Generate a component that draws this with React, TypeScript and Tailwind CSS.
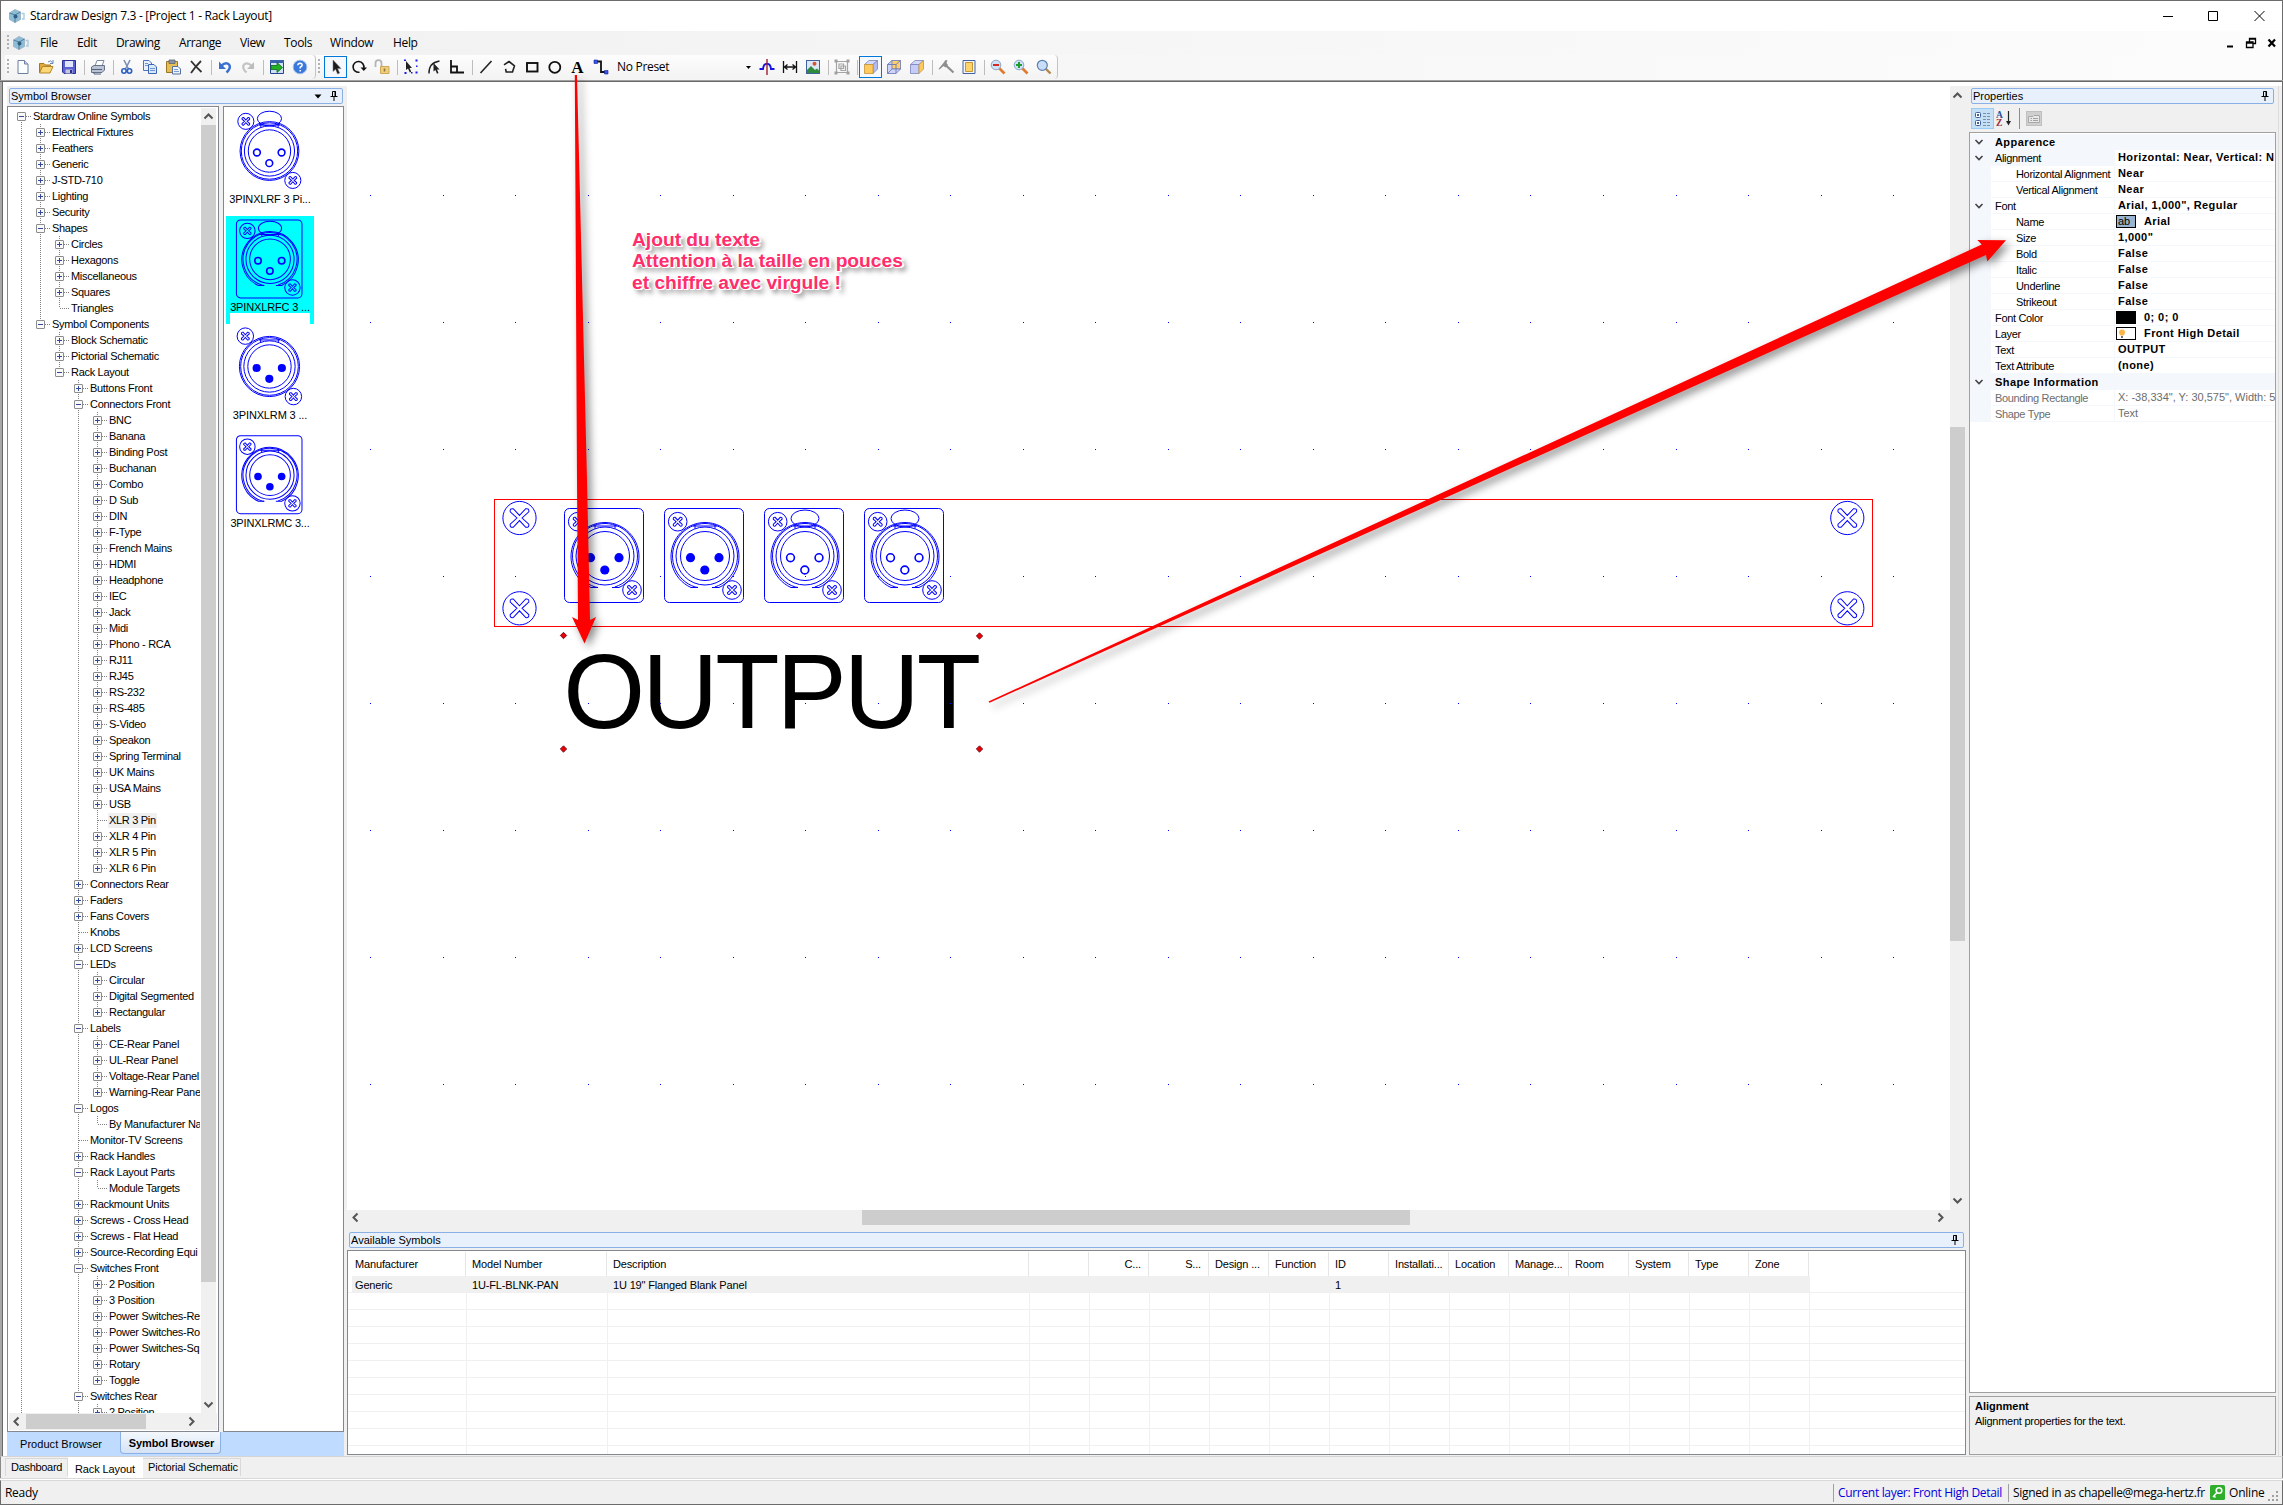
import React from "react";

const SANS = "font-['Liberation_Sans',Arial,sans-serif] text-[11px]";
const UI = "font-['Open_Sans','Noto_Sans',sans-serif] text-[12px]";

/* ---------- tree data: [level, state, label] ---------- */
type Row = [number, "+" | "-" | "", string];
const TREE: Row[] = [
  [0, "-", "Stardraw Online Symbols"],
  [1, "+", "Electrical Fixtures"],
  [1, "+", "Feathers"],
  [1, "+", "Generic"],
  [1, "+", "J-STD-710"],
  [1, "+", "Lighting"],
  [1, "+", "Security"],
  [1, "-", "Shapes"],
  [2, "+", "Circles"],
  [2, "+", "Hexagons"],
  [2, "+", "Miscellaneous"],
  [2, "+", "Squares"],
  [2, "", "Triangles"],
  [1, "-", "Symbol Components"],
  [2, "+", "Block Schematic"],
  [2, "+", "Pictorial Schematic"],
  [2, "-", "Rack Layout"],
  [3, "+", "Buttons Front"],
  [3, "-", "Connectors Front"],
  [4, "+", "BNC"],
  [4, "+", "Banana"],
  [4, "+", "Binding Post"],
  [4, "+", "Buchanan"],
  [4, "+", "Combo"],
  [4, "+", "D Sub"],
  [4, "+", "DIN"],
  [4, "+", "F-Type"],
  [4, "+", "French Mains"],
  [4, "+", "HDMI"],
  [4, "+", "Headphone"],
  [4, "+", "IEC"],
  [4, "+", "Jack"],
  [4, "+", "Midi"],
  [4, "+", "Phono - RCA"],
  [4, "+", "RJ11"],
  [4, "+", "RJ45"],
  [4, "+", "RS-232"],
  [4, "+", "RS-485"],
  [4, "+", "S-Video"],
  [4, "+", "Speakon"],
  [4, "+", "Spring Terminal"],
  [4, "+", "UK Mains"],
  [4, "+", "USA Mains"],
  [4, "+", "USB"],
  [4, "", "XLR 3 Pin"],
  [4, "+", "XLR 4 Pin"],
  [4, "+", "XLR 5 Pin"],
  [4, "+", "XLR 6 Pin"],
  [3, "+", "Connectors Rear"],
  [3, "+", "Faders"],
  [3, "+", "Fans Covers"],
  [3, "", "Knobs"],
  [3, "+", "LCD Screens"],
  [3, "-", "LEDs"],
  [4, "+", "Circular"],
  [4, "+", "Digital Segmented"],
  [4, "+", "Rectangular"],
  [3, "-", "Labels"],
  [4, "+", "CE-Rear Panel"],
  [4, "+", "UL-Rear Panel"],
  [4, "+", "Voltage-Rear Panel"],
  [4, "+", "Warning-Rear Pane"],
  [3, "-", "Logos"],
  [4, "", "By Manufacturer Na"],
  [3, "", "Monitor-TV Screens"],
  [3, "+", "Rack Handles"],
  [3, "-", "Rack Layout Parts"],
  [4, "", "Module Targets"],
  [3, "+", "Rackmount Units"],
  [3, "+", "Screws - Cross Head"],
  [3, "+", "Screws - Flat Head"],
  [3, "+", "Source-Recording Equi"],
  [3, "-", "Switches Front"],
  [4, "+", "2 Position"],
  [4, "+", "3 Position"],
  [4, "+", "Power Switches-Re"],
  [4, "+", "Power Switches-Ro"],
  [4, "+", "Power Switches-Sq"],
  [4, "+", "Rotary"],
  [4, "+", "Toggle"],
  [3, "-", "Switches Rear"],
  [4, "+", "2 Position"],
];

function continues(i: number, level: number) {
  for (let j = i + 1; j < TREE.length; j++) {
    if (TREE[j][0] === level) return true;
    if (TREE[j][0] < level) return false;
  }
  return level === 0 || level >= 3;
}

function TreeRow({ i }: { i: number }) {
  const [level, state, label] = TREE[i];
  const cells = [];
  for (let l = 0; l < level; l++) {
    cells.push(
      <svg key={l} className="h-4 w-[19px] shrink-0" viewBox="0 0 19 16">
        {continues(i, l) && <path d="M9.5 0V16" stroke="#808080" strokeDasharray="1 1" />}
      </svg>,
    );
  }
  return (
    <div className="flex h-4 shrink-0 items-center pl-1">
      {cells}
      <svg className="h-4 w-[19px] shrink-0" viewBox="0 0 19 16" fill="none">
        {i > 0 && <path d="M9.5 0V8" stroke="#808080" strokeDasharray="1 1" />}
        {continues(i, level) && <path d="M9.5 8V16" stroke="#808080" strokeDasharray="1 1" />}
        <path d="M10 8.5H19" stroke="#808080" strokeDasharray="1 1" />
        {state && (
          <>
            <rect x="5.5" y="4.5" width="8" height="8" rx="0.5" fill="#fafafa" stroke="#8c8c8c" />
            <path d={state === "+" ? "M7 8.5H12M9.5 6V11" : "M7 8.5H12"} stroke="#33499a" />
          </>
        )}
      </svg>
      <span
        className={
          "ml-px px-px leading-[15px] tracking-[-0.3px] whitespace-nowrap " +
          (label === "XLR 3 Pin" ? "bg-[#f0f0f0]" : "")
        }
      >
        {label}
      </span>
    </div>
  );
}

/* ---------- small shared drawings ---------- */
function Chevron({ dir }: { dir: "up" | "down" | "left" | "right" }) {
  const d = {
    up: "M3.5 9.5L7.5 5.5L11.5 9.5",
    down: "M3.5 5.5L7.5 9.5L11.5 5.5",
    left: "M9.5 3.5L5.5 7.5L9.5 11.5",
    right: "M5.5 3.5L9.5 7.5L5.5 11.5",
  }[dir];
  return (
    <svg className="h-[15px] w-[15px] shrink-0" viewBox="0 0 15 15" fill="none">
      <path d={d} stroke="#555" strokeWidth="2" />
    </svg>
  );
}

function Pin() {
  return (
    <svg className="h-3 w-2 shrink-0" viewBox="0 0 8 12" fill="none" stroke="#000">
      <path d="M2.5 1.5H5.5V6.5H2.5ZM5 1V7M0.5 6.5H7.5M4 7V11" />
    </svg>
  );
}

function PanelHeader({ title, arrow }: { title: string; arrow?: boolean }) {
  return (
    <div className="flex h-4 shrink-0 items-center rounded-[2px] border border-[#8bb0e6] bg-[#e8f0fb] pr-1 pl-px">
      <span className="flex-1 leading-[14px]">{title}</span>
      {arrow && (
        <svg className="mr-2 h-[5px] w-2" viewBox="0 0 8 5">
          <path d="M0.5 0.5H7.5L4 4.5Z" />
        </svg>
      )}
      <Pin />
    </div>
  );
}

/* ---------- connector symbols ---------- */
function Cross({ x, y, len, hw }: { x: number; y: number; len: number; hw: number }) {
  const a = len;
  const b = hw;
  return (
    <path
      transform={`translate(${x} ${y}) rotate(45)`}
      d={`M${-b} ${-b}L${-b * 1.2} ${-a + b}Q0 ${-a - b * 0.6} ${b * 1.2} ${-a + b}L${b} ${-b}L${a - b} ${-b * 1.2}Q${a + b * 0.6} 0 ${a - b} ${b * 1.2}L${b} ${b}L${b * 1.2} ${a - b}Q0 ${a + b * 0.6} ${-b * 1.2} ${a - b}L${-b} ${b}L${-a + b} ${b * 1.2}Q${-a - b * 0.6} 0 ${-a + b} ${-b * 1.2}Z`}
    />
  );
}

function Xlr({ x, y, s = 1, female, card }: { x: number; y: number; s?: number; female?: boolean; card?: boolean }) {
  const pins: [number, number][] = [
    [26.5, 49.7],
    [55, 49.7],
    [40.8, 62],
  ];
  return (
    <g transform={`translate(${x} ${y}) scale(${s})`} fill="none" stroke="#0000ff" strokeWidth={1 / s}>
      {card && <rect x="0.5" y="0.5" width="79" height="94" rx="5" />}
      <circle cx="13.7" cy="13.7" r="9.3" />
      <Cross x={13.7} y={13.7} len={6} hw={1.1} />
      <circle cx="68" cy="82" r="9.3" />
      <Cross x={68} y={82} len={6} hw={1.1} />
      {card ? (
        <>
          <path d="M34 79.5H27A34 34 0 1 1 55 79.5H48" />
          <path d="M34 79.5L31.2 79A32.5 32.5 0 1 1 50.8 79" />
        </>
      ) : (
        <>
          <circle cx="41" cy="48" r="34" />
          <circle cx="41" cy="48" r="32.6" />
        </>
      )}
      <circle cx="41" cy="48" r="29" />
      <circle cx="41" cy="48" r="24.5" />
      <path d="M31 16.5V20.5M51 16.5V20.5M29 18H53" />
      {female && <ellipse cx="41" cy="10.5" rx="14" ry="8.5" />}
      {pins.map(([px, py]) =>
        female ? (
          <circle key={px} cx={px} cy={py} r="3.9" strokeWidth={1.6 / s} />
        ) : (
          <circle key={px} cx={px} cy={py} r="4.6" fill="#0000ff" stroke="none" />
        ),
      )}
    </g>
  );
}

/* ---------- toolbar ---------- */
const ICONS: Record<string, React.ReactNode> = {
  new: (
    <>
      <path d="M3 1.5H9.5L13 5V14.5H3Z" fill="#fbfdff" stroke="#6d7fa3" />
      <path d="M9.5 1.5V5H13" fill="#c9d6ee" stroke="#6d7fa3" />
    </>
  ),
  open: (
    <>
      <path d="M1.5 13.5V4.5H6L7.5 6H12.5V8" fill="#e0a93a" stroke="#a8761c" />
      <path d="M1.5 14L4.5 7.5H15L12 14Z" fill="#fbd778" stroke="#b38528" />
      <path d="M10 3Q12.5 0.5 14.5 3.5M15 1V4.5H12" fill="none" stroke="#6888b8" />
    </>
  ),
  save: (
    <>
      <path d="M1.5 1.5H14.5V14.5H3L1.5 13Z" fill="#5b60d2" stroke="#2b2f8f" />
      <path d="M4 2H12V8H4Z" fill="#dfe6fb" />
      <path d="M4.5 10.5H11.5V14.5H4.5Z" fill="#c8c8d8" />
      <path d="M9 11V14H11V11Z" fill="#2b2f8f" />
    </>
  ),
  print: (
    <>
      <path d="M5 7L7 1.5H14L12 7Z" fill="#fff" stroke="#7c8aa5" />
      <path d="M1.5 8L4 6.5H14.5V11L12 13.5H1.5Z" fill="#b9c3d4" stroke="#66728a" />
      <path d="M2 10.5H12M4 13V15H11" stroke="#55617a" fill="none" />
    </>
  ),
  cut: (
    <>
      <path d="M5 1L9.5 10M11 1L6.5 10" stroke="#7a8fb5" strokeWidth="1.6" fill="none" />
      <circle cx="5" cy="12" r="2.2" fill="none" stroke="#2a5fc2" strokeWidth="1.6" />
      <circle cx="10.5" cy="12" r="2.2" fill="none" stroke="#2a5fc2" strokeWidth="1.6" />
    </>
  ),
  copy: (
    <>
      <path d="M1.5 1.5H7L9.5 4V11.5H1.5Z" fill="#e8f0fd" stroke="#4c74b8" />
      <path d="M6.5 5.5H12L14.5 8V14.5H6.5Z" fill="#dbe8fc" stroke="#3b66b0" />
      <path d="M8 9.5H13M8 11.5H13M3 4.5H6M3 6.5H6" stroke="#6f93cf" />
    </>
  ),
  paste: (
    <>
      <path d="M1.5 2.5H12.5V13.5H1.5Z" fill="#e7bd55" stroke="#9c7523" />
      <path d="M4 1H10V4.5H4Z" fill="#8b93a5" stroke="#5d6475" strokeWidth="0.8" />
      <path d="M7.5 7.5H13L15.5 10V15H7.5Z" fill="#eef3fc" stroke="#56709f" />
      <path d="M9 10.5H13M9 12.5H14" stroke="#7d9cd0" />
    </>
  ),
  x: <path d="M3 2Q7 7 13.5 13M13 2Q7 8 3 14" stroke="#333" strokeWidth="1.8" fill="none" />,
  undo: (
    <>
      <path d="M4 7Q9 2.5 12 5.5Q14.5 9 9.5 13.5" fill="none" stroke="#3a6fd0" strokeWidth="2.4" />
      <path d="M2 2.5V10H9Z" fill="#3a6fd0" />
    </>
  ),
  redo: (
    <>
      <path d="M12 7Q7 2.5 4 5.5Q1.5 9 6.5 13.5" fill="none" stroke="#c3c3c3" strokeWidth="2.2" />
      <path d="M14 3V10H7Z" fill="#bdbdbd" />
    </>
  ),
  import: (
    <>
      <path d="M1.5 1.5H14.5V14.5H1.5Z" fill="#cfe0f7" stroke="#27458e" />
      <path d="M1 1H15V4H1Z" fill="#3963ae" />
      <path d="M2 6.5H8V3.5L13.5 8.5L8 13.5V10.5H2Z" fill="#22b022" stroke="#0d6b14" strokeWidth="0.8" />
    </>
  ),
  help: (
    <>
      <circle cx="8" cy="8" r="6.8" fill="#3b78dc" stroke="#9db9e8" />
      <path d="M5.8 6.2Q6 4.2 8 4.2Q10.3 4.3 10.2 6.2Q10 7.4 8.2 8.2V9.6M8.2 11V12.6" stroke="#fff" strokeWidth="1.5" fill="none" />
    </>
  ),
  select: <path d="M5 1V12.5L7.6 10.2L9.6 15L11.6 14.1L9.6 9.6H13Z" fill="#1c1c1c" stroke="#777" strokeWidth="0.5" />,
  rotate: (
    <>
      <path d="M12.8 9A5.4 5.4 0 1 0 8.5 13.2" fill="none" stroke="#111" strokeWidth="1.6" />
      <path d="M9.5 8.5H16L12.8 12Z" fill="#111" />
    </>
  ),
  lock: (
    <>
      <path d="M1.5 8V4.5Q1.5 1.2 4.5 1.2T7.5 4.5V8" fill="none" stroke="#b5b5b5" strokeWidth="1.8" />
      <path d="M6.5 7.5H15V14.5H6.5Z" fill="#efcd7c" stroke="#cda857" />
      <path d="M10.5 9.5V12.5" stroke="#8d7434" strokeWidth="1.6" />
    </>
  ),
  nodes: (
    <>
      <path d="M3 2V11L5 9.5L6.8 13.5L8.2 12.7L6.6 9H9Z" fill="#222" />
      <path d="M1 0.5H3V2H1ZM12.5 0.5H14.5V2.5H12.5ZM12.5 12.5H14.5V14.5H12.5ZM1.5 13H3.5V15H1.5ZM13 6.5H14.5V8H13ZM8 13H9.5V14.5H8Z" fill="#1a1af0" />
    </>
  ),
  curve: (
    <>
      <path d="M3 14.5Q2.5 4 13.5 2" fill="none" stroke="#222" strokeWidth="1.4" />
      <path d="M7.5 4V12.5L9.4 11L11 14.8L12.5 14L11 10.4H13.6Z" fill="#222" />
    </>
  ),
  angle: <path d="M2 1V13.5H15M2 7.5H8V13.5" fill="none" stroke="#111" strokeWidth="1.8" />,
  line: <path d="M2.5 14L13.5 2" stroke="#222" strokeWidth="1.6" />,
  poly: <path d="M3 5.8L8 2.5L13.5 6.8L11.5 13H5.2L4.6 9.8" fill="none" stroke="#222" strokeWidth="1.6" strokeLinejoin="round" />,
  rect: <rect x="3" y="4" width="10.5" height="8.5" fill="none" stroke="#111" strokeWidth="1.9" />,
  ellipse: <circle cx="7.8" cy="8.3" r="5.5" fill="none" stroke="#111" strokeWidth="1.8" />,
  connector: (
    <>
      <path d="M3 2.5H8V13H13" fill="none" stroke="#111" strokeWidth="1.8" />
      <path d="M1 1H4.5V4.5H1ZM11.5 11.5H15V15H11.5Z" fill="#3a55e8" stroke="#1020a0" strokeWidth="0.6" />
    </>
  ),
  jump: (
    <>
      <path d="M0.5 10H4Q4.5 4.8 8 4.8T12 10H15.5" fill="none" stroke="#1414e0" strokeWidth="1.9" />
      <path d="M8 0V16" stroke="#a0202c" strokeWidth="1.4" />
    </>
  ),
  dim: <path d="M1.5 2V14M14.5 2V14M2 8H14M5.5 5.5L2.5 8L5.5 10.5M10.5 5.5L13.5 8L10.5 10.5" fill="none" stroke="#111" strokeWidth="1.3" />,
  picture: (
    <>
      <rect x="1.5" y="1.5" width="13" height="13" fill="#dbe7f8" stroke="#44619c" />
      <path d="M2 11L6 7L10 11L12 9.5L14 11.5V14H2Z" fill="#2f8b3c" />
      <circle cx="9.5" cy="4.8" r="2" fill="#d9542b" />
    </>
  ),
  group: (
    <>
      <path d="M2.5 2.5H13.5V13.5H2.5ZM5 5H9.5V9.5H5ZM7 7H11.5V11.5H7Z" fill="none" stroke="#a5a5a5" strokeWidth="1.2" />
      <path d="M0.5 0.5H3.5V3.5H0.5ZM12.5 0.5H15.5V3.5H12.5ZM0.5 12.5H3.5V15.5H0.5ZM12.5 12.5H15.5V15.5H12.5Z" fill="#a0a0a0" />
    </>
  ),
  cubeFront: (
    <>
      <path d="M1.5 5.5L6 1.5H14.5L10 5.5Z" fill="#d5d9fb" stroke="#7b84bb" strokeWidth="0.8" />
      <path d="M10 5.5L14.5 1.5V10L10 14.5Z" fill="#b3bbf0" stroke="#7b84bb" strokeWidth="0.8" />
      <path d="M1.5 5.5H10V14.5H1.5Z" fill="#ffc95c" stroke="#c4963a" strokeWidth="0.8" />
    </>
  ),
  cubeMid: (
    <>
      <path d="M1.5 5.5L6 1.5H14.5V10L10 14.5H1.5Z" fill="#cdd3fa" />
      <path d="M6 1.5H14.5V10H6Z" fill="#ffd06b" stroke="#6b77b4" strokeWidth="0.8" />
      <path d="M1.5 14.5L6 10H14.5L10 14.5Z" fill="#cdd3fa" stroke="#6b77b4" strokeWidth="0.8" />
      <path d="M1.5 5.5L6 1.5M1.5 5.5H10V14.5M1.5 5.5V14.5M10 5.5L14.5 1.5" fill="none" stroke="#6b77b4" strokeWidth="0.9" />
    </>
  ),
  cubeSide: (
    <>
      <path d="M1.5 5.5L6 1.5H14.5L10 5.5Z" fill="#d5d9fb" stroke="#7b84bb" strokeWidth="0.8" />
      <path d="M1.5 5.5H10V14.5H1.5Z" fill="#c6ccf8" stroke="#7b84bb" strokeWidth="0.8" />
      <path d="M10 5.5L14.5 1.5V10L10 14.5Z" fill="#ffc95c" stroke="#c4963a" strokeWidth="0.8" />
    </>
  ),
  hammer: (
    <>
      <path d="M0.5 10L5 4.5L7.5 1L9.5 1.5L8.5 4L10 6L7.5 8.5L5.5 7L1.5 10.5Z" fill="#8e8e8e" />
      <path d="M8 6.5L15.5 13.5" stroke="#8e8e8e" strokeWidth="2.2" />
    </>
  ),
  frame: (
    <>
      <path d="M2 1.5H14V14.5H2Z" fill="#f2f5fb" stroke="#44629f" />
      <path d="M4.5 3.5H11.5V12.5H4.5Z" fill="#ffd36b" stroke="#c9962f" />
    </>
  ),
  zoomOut: (
    <>
      <path d="M9 9L14.5 14.5" stroke="#e07a2e" strokeWidth="2.6" />
      <circle cx="6" cy="6" r="4.8" fill="#cfe2f8" stroke="#8ca6c8" />
      <path d="M3 6H9" stroke="#d42a1c" strokeWidth="2" />
    </>
  ),
  zoomIn: (
    <>
      <path d="M9 9L14.5 14.5" stroke="#e07a2e" strokeWidth="2.6" />
      <circle cx="6" cy="6" r="4.8" fill="#cfe2f8" stroke="#8ca6c8" />
      <path d="M3 6H9M6 3V9" stroke="#1f9c2e" strokeWidth="2" />
    </>
  ),
  zoom: (
    <>
      <path d="M9.5 9.5L14.5 14.5" stroke="#b08747" strokeWidth="2.4" />
      <circle cx="6.3" cy="6.3" r="5" fill="#c8ddf7" stroke="#5d7fb0" strokeWidth="1.2" />
    </>
  ),
};

function Tool({ name, on }: { name: string; on?: boolean }) {
  return (
    <div
      className={
        "flex h-[22px] w-[23px] shrink-0 items-center justify-center " +
        (on ? "border border-[#0078d7] bg-[#f5f9fd]" : "")
      }
    >
      {name === "A" ? (
        <span className="font-['Liberation_Serif',serif] text-[17px] leading-none font-bold">A</span>
      ) : (
        <svg className="h-4 w-4 shrink-0" viewBox="0 0 16 16">
          {ICONS[name]}
        </svg>
      )}
    </div>
  );
}

function Sep() {
  return (
    <div className="flex h-[15px] w-1.5 shrink-0 justify-end pr-px">
      <div className="w-px bg-[#bdbdbd]" />
    </div>
  );
}

function Grip() {
  return (
    <svg className="h-4 w-[3px] shrink-0" viewBox="0 0 3 16">
      <path d="M1 0V16" stroke="#b0b0b0" strokeWidth="2" strokeDasharray="2 2" />
    </svg>
  );
}

function AppLogo() {
  return (
    <svg className="h-4 w-4 shrink-0" viewBox="0 0 16 16">
      <path d="M0.5 5L6 1.5L11.5 4V11.5L6 14.5L0.5 11.5Z" fill="#8fbdd8" stroke="#9fb8c8" />
      <path d="M0.5 5L6 7L11.5 4M6 7V14.5" stroke="#4f7f9c" fill="none" />
      <circle cx="6.5" cy="8.5" r="2" fill="#2d5f80" />
      <path d="M12.5 5.5H15V11H13" stroke="#a8cde0" strokeWidth="1.4" fill="none" />
    </svg>
  );
}

function Toolbar() {
  return (
    <div className="flex h-[25px] shrink-0 bg-[#f6f6f6] bg-linear-to-r from-[#f2f2f2] to-[#fcfcfc] pl-1">
      <div className="flex h-[24px] w-[311px] shrink-0 items-center rounded-r border-r border-[#c4c4c4] bg-linear-to-b from-[#fdfdfd] to-[#f3f3f3] pl-0.5">
        <Grip />
        <div className="w-[1px] shrink-0" />
        <Tool name="new" />
        <Tool name="open" />
        <Tool name="save" />
        <Sep />
        <Tool name="print" />
        <Sep />
        <Tool name="cut" />
        <Tool name="copy" />
        <Tool name="paste" />
        <Tool name="x" />
        <Sep />
        <Tool name="undo" />
        <Tool name="redo" />
        <Sep />
        <Tool name="import" />
        <Tool name="help" />
      </div>
      <div className="flex h-[24px] w-[742px] shrink-0 items-center rounded-r border-r border-[#c4c4c4] bg-linear-to-b from-[#fdfdfd] to-[#f3f3f3] pl-0.5">
        <Grip />
        <div className="w-[3px] shrink-0" />
        <Tool name="select" on />
        <Tool name="rotate" />
        <Tool name="lock" />
        <Sep />
        <Tool name="nodes" />
        <Tool name="curve" />
        <Tool name="angle" />
        <Sep />
        <Tool name="line" />
        <Tool name="poly" />
        <Tool name="rect" />
        <Tool name="ellipse" />
        <Tool name="A" />
        <Tool name="connector" />
        <div className="flex w-[143px] shrink-0 items-center justify-between pr-1 pl-[5px]">
          <span className="tracking-[-0.3px]">No Preset</span>
          <svg className="h-[3px] w-[5px]" viewBox="0 0 5 3">
            <path d="M0 0H5L2.5 3Z" />
          </svg>
        </div>
        <Tool name="jump" />
        <Tool name="dim" />
        <Tool name="picture" />
        <Sep />
        <Tool name="group" />
        <Sep />
        <Tool name="cubeFront" on />
        <Tool name="cubeMid" />
        <Tool name="cubeSide" />
        <Sep />
        <Tool name="hammer" />
        <Tool name="frame" />
        <Sep />
        <Tool name="zoomOut" />
        <Tool name="zoomIn" />
        <Tool name="zoom" />
      </div>
    </div>
  );
}

/* ---------- left panel ---------- */
const THUMBS = [
  { label: "3PINXLRF 3 Pi...", x: 8, y: 1.5, s: 0.865, female: true, card: false },
  { label: "3PINXLRFC 3 ...", x: 10, y: 3.5, s: 0.83, female: true, card: true },
  { label: "3PINXLRM 3 ...", x: 7.2, y: 0, s: 0.885, female: false, card: false },
  { label: "3PINXLRMC 3...", x: 10, y: 3.3, s: 0.83, female: false, card: true },
];

function SymbolBrowser() {
  return (
    <div className="flex w-[340px] shrink-0 flex-col bg-[#f0f0f0] pt-0.5">
      <div className="mr-1 mb-0.5 ml-0.5">
        <PanelHeader title="Symbol Browser" arrow />
      </div>
      <div className="flex h-[1326px] shrink-0 gap-1">
        <div className="flex w-[212px] flex-col border border-[#828790] bg-white p-px">
          <div className="flex h-[1305px]">
            <div className="mr-px -ml-px flex w-[192px] flex-col overflow-hidden">
              {TREE.map((_, i) => (
                <TreeRow key={i} i={i} />
              ))}
            </div>
            <div className="flex w-[15px] flex-col items-center bg-[#f0f0f0]">
              <div className="flex h-[17px] items-center">
                <Chevron dir="up" />
              </div>
              <div className="h-[1157px] w-[15px] bg-[#cdcdcd]" />
              <div className="mt-auto flex h-[17px] items-center">
                <Chevron dir="down" />
              </div>
            </div>
          </div>
          <div className="flex h-[17px] items-center bg-[#f0f0f0]">
            <Chevron dir="left" />
            <div className="ml-0.5 h-[15px] w-[120px] bg-[#cdcdcd]" />
            <div className="ml-[38px]">
              <Chevron dir="right" />
            </div>
          </div>
        </div>
        <div className="flex w-[121px] flex-col border border-[#828790] bg-white pt-px pl-0.5">
          {THUMBS.map((t, i) => (
            <div key={t.label} className="flex h-[108px] w-[88px] shrink-0 flex-col">
              <div className={"flex h-[97px] flex-col items-center " + (i === 1 ? "bg-[#00ffff]" : "")}>
                <svg className="h-[84px] w-[88px] shrink-0" viewBox="0 0 88 84">
                  <Xlr x={t.x} y={t.y} s={t.s} female={t.female} card={t.card} />
                </svg>
                <span className="leading-[14px] tracking-[-0.15px] whitespace-nowrap">{t.label}</span>
              </div>
              {i === 1 && <div className="h-[11px] border-x-4 border-[#00ffff]" />}
            </div>
          ))}
        </div>
      </div>
      <div className="flex h-6 w-[337px] shrink-0 bg-[#bfdbff]">
        <div className="flex w-[113px] items-center pl-[13px] tracking-[0.05px]">Product Browser</div>
        <div className="flex h-[22px] w-[101px] items-center justify-center rounded-b border border-t-0 border-[#8bb0e6] bg-linear-to-b from-[#f4f8fd] to-[#d5e3f5] pt-0.5 pl-0.5 font-bold tracking-[-0.1px] whitespace-nowrap">
          Symbol Browser
        </div>
      </div>
    </div>
  );
}

/* ---------- drawing area ---------- */
function Drawing() {
  const dots = [];
  for (let r = 0; r < 8; r++)
    for (let c = 0; c < 22; c++)
      dots.push(
        <rect key={`${r}-${c}`} x={Math.round(370 + c * 72.53)} y={Math.round(195 + r * 127)} width="1" height="1" fill="#0000ff" />,
      );
  const screws: [number, number][] = [
    [519.5, 518],
    [519.5, 608.3],
    [1847.3, 518],
    [1847.3, 608.3],
  ];
  const handles: [number, number][] = [
    [563.5, 635.5],
    [979.5, 636],
    [563.5, 749],
    [979.5, 749],
  ];
  return (
    <svg className="h-[1124px] w-[1603px] shrink-0 bg-white" viewBox="347 86 1603 1124">
      <rect x="494.5" y="499.5" width="1378" height="127" fill="none" stroke="#ff0000" />
      <g fill="none" stroke="#0000ff">
        {screws.map(([x, y]) => (
          <g key={`${x}-${y}`}>
            <circle cx={x} cy={y} r="16.6" />
            <Cross x={x} y={y} len={12.8} hw={1.8} />
          </g>
        ))}
      </g>
      <Xlr x={564} y={508} card />
      <Xlr x={664} y={508} card />
      <Xlr x={764} y={508} card female />
      <Xlr x={864} y={508} card female />
      <text x="563.3" y="727.5" fontSize="105.3" letterSpacing="-3" className="font-['Liberation_Sans',Arial,sans-serif]">
        OUTPUT
      </text>
      {dots}
      {handles.map(([x, y]) => (
        <path key={`${x}-${y}`} d={`M${x - 3.2} ${y}L${x} ${y - 3.2}L${x + 3.2} ${y}L${x} ${y + 3.2}Z`} fill="#e8000c" stroke="#6b0005" strokeWidth="0.8" />
      ))}
    </svg>
  );
}

const COLUMNS = [
  { t: "Manufacturer", c: "w-[118px] pl-[7px]" },
  { t: "Model Number", c: "w-[141px] pl-[6px]" },
  { t: "Description", c: "w-[422px] pl-[6px]" },
  { t: "", c: "w-[60px]" },
  { t: "C...", c: "w-[60px] pr-[7px] text-right" },
  { t: "S...", c: "w-[60px] pr-[7px] text-right" },
  { t: "Design ...", c: "w-[60px] pl-[6px]" },
  { t: "Function", c: "w-[60px] pl-[6px]" },
  { t: "ID", c: "w-[60px] pl-[6px]" },
  { t: "Installati...", c: "w-[60px] pl-[6px]" },
  { t: "Location", c: "w-[60px] pl-[6px]" },
  { t: "Manage...", c: "w-[60px] pl-[6px]" },
  { t: "Room", c: "w-[60px] pl-[6px]" },
  { t: "System", c: "w-[60px] pl-[6px]" },
  { t: "Type", c: "w-[60px] pl-[6px]" },
  { t: "Zone", c: "w-[60px] pl-[6px]" },
];
const VALUES = ["Generic", "1U-FL-BLNK-PAN", '1U 19" Flanged Blank Panel', "", "", "", "", "", "1", "", "", "", "", "", "", ""];

function SymbolTable() {
  return (
    <div className="flex h-[205px] flex-col overflow-hidden border border-[#828790] bg-white tracking-[-0.16px]">
      <div className="flex h-[25px] shrink-0 pt-px">
        {COLUMNS.map((c, i) => (
          <div key={i} className={"shrink-0 border-r border-[#e5e5e5] leading-[25px] whitespace-nowrap " + c.c}>
            {c.t}
          </div>
        ))}
      </div>
      <div className="flex h-[17px] shrink-0 border-b border-[#f0f0f0] pl-1">
        <div className="flex w-[1458px] bg-[#f0f0f0]">
          {COLUMNS.map((c, i) => (
            <div key={i} className={"shrink-0 leading-[18px] whitespace-nowrap " + c.c + (i === 0 ? " -ml-1" : "")}>
              {VALUES[i]}
            </div>
          ))}
        </div>
      </div>
      {Array.from({ length: 10 }, (_, r) => (
        <div key={r} className="flex h-[17px] shrink-0 border-b border-[#f0f0f0] pl-px">
          {COLUMNS.map((c, i) => (
            <div key={i} className={"shrink-0 border-r border-[#f0f0f0] " + c.c} />
          ))}
        </div>
      ))}
    </div>
  );
}

function Center() {
  return (
    <div className="flex w-[1622px] shrink-0 flex-col bg-[#f0f0f0]">
      <div className="flex h-[1124px] shrink-0">
        <Drawing />
        <div className="flex w-[15px] flex-col">
          <div className="flex h-[341px] flex-col pt-0.5">
            <Chevron dir="up" />
          </div>
          <div className="h-[514px] bg-[#cdcdcd]" />
          <div className="mt-auto pb-0.5">
            <Chevron dir="down" />
          </div>
        </div>
      </div>
      <div className="flex h-[15px] shrink-0 pl-px">
        <Chevron dir="left" />
        <div className="ml-[499px] h-[15px] w-[548px] bg-[#cdcdcd]" />
        <div className="ml-[523px]">
          <Chevron dir="right" />
        </div>
      </div>
      <div className="mt-[7px] mr-[5px] mb-0.5 ml-0.5">
        <PanelHeader title="Available Symbols" />
      </div>
      <div className="mr-[3px]">
        <SymbolTable />
      </div>
    </div>
  );
}

/* ---------- properties ---------- */
type Prop = { k: string; v?: string; kind: "cat" | "exp" | "sub" | "row" | "off"; icon?: "ab" | "black" | "bulb" };
const PROPS: Prop[] = [
  { k: "Apparence", kind: "cat" },
  { k: "Alignment", v: "Horizontal: Near, Vertical: N", kind: "exp" },
  { k: "Horizontal Alignment", v: "Near", kind: "sub" },
  { k: "Vertical Alignment", v: "Near", kind: "sub" },
  { k: "Font", v: 'Arial, 1,000", Regular', kind: "exp" },
  { k: "Name", v: "Arial", kind: "sub", icon: "ab" },
  { k: "Size", v: '1,000"', kind: "sub" },
  { k: "Bold", v: "False", kind: "sub" },
  { k: "Italic", v: "False", kind: "sub" },
  { k: "Underline", v: "False", kind: "sub" },
  { k: "Strikeout", v: "False", kind: "sub" },
  { k: "Font Color", v: "0; 0; 0", kind: "row", icon: "black" },
  { k: "Layer", v: "Front High Detail", kind: "row", icon: "bulb" },
  { k: "Text", v: "OUTPUT", kind: "row" },
  { k: "Text Attribute", v: "(none)", kind: "row" },
  { k: "Shape Information", kind: "cat" },
  { k: "Bounding Rectangle", v: 'X: -38,334", Y: 30,575", Width: 5', kind: "off" },
  { k: "Shape Type", v: "Text", kind: "off" },
];

function PropRow({ p }: { p: Prop }) {
  const cat = p.kind === "cat";
  return (
    <div className={"flex h-4 shrink-0 whitespace-nowrap " + (p.kind === "off" ? "text-[#6d6d6d]" : "")}>
      <div className="flex w-[21px] shrink-0 items-center justify-center bg-[#f4f7fc]">
        {(cat || p.kind === "exp") && (
          <svg className="-ml-[3px] h-2 w-2.5" viewBox="0 0 10 8" fill="none">
            <path d="M1.5 2L5 5.5L8.5 2" stroke="#444" strokeWidth="1.6" />
          </svg>
        )}
      </div>
      {cat ? (
        <div className="flex-1 bg-[#f4f7fc] pl-1 leading-[16px] font-bold tracking-[0.42px]">{p.k}</div>
      ) : (
        <>
          <div
            className={
              "w-[124px] shrink-0 overflow-hidden border-r border-b border-[#f4f7fc] leading-[16px] tracking-[-0.33px] " +
              (p.kind === "sub" ? "pl-[25px]" : "pl-1") +
              (p.k === "Alignment" ? " bg-[#f4f7fc]" : "")
            }
          >
            {p.k}
          </div>
          <div
            className={
              "flex flex-1 items-center overflow-hidden border-b border-[#f4f7fc] leading-[15px] " +
              (p.kind === "off" ? "tracking-[0px]" : "font-bold tracking-[0.42px]") +
              (p.icon ? " pl-px" : " pl-[3px]")
            }
          >
            {p.icon === "ab" && (
              <span className="mr-2 flex h-[13px] w-5 items-center border border-black bg-[#99b4d1] pl-px text-[11px] font-normal tracking-normal">
                ab
              </span>
            )}
            {p.icon === "black" && <span className="mr-2 h-[13px] w-5 bg-black" />}
            {p.icon === "bulb" && (
              <span className="mr-2 flex h-[13px] w-5 items-center border border-black bg-white pl-px">
                <svg className="h-2.5 w-2" viewBox="0 0 8 10">
                  <path d="M1 3.5A3 3 0 1 1 7 3.5Q7 5 5.5 6.5H2.5Q1 5 1 3.5Z" fill="#ffb545" />
                  <path d="M3 7H5V9H3Z" fill="#6d7480" />
                </svg>
              </span>
            )}
            {p.v}
          </div>
        </>
      )}
    </div>
  );
}

function Properties() {
  return (
    <div className="flex w-[307px] shrink-0 flex-col pt-0.5">
      <div className="mr-0.5 ml-0.5">
        <PanelHeader title="Properties" />
      </div>
      <div className="flex h-7 shrink-0 items-center pt-px pl-0.5">
        <div className="flex h-[21px] w-[23px] items-center justify-center border border-[#99ccf5] bg-[#c4e0f7]">
          <svg className="h-4 w-[17px]" viewBox="0 0 17 16" fill="none">
            <rect x="1.5" y="1.5" width="5" height="5" rx="1" fill="#fff" stroke="#3f5f98" />
            <rect x="1.5" y="9.5" width="5" height="5" rx="1" fill="#fff" stroke="#3f5f98" />
            <path d="M3 4H5M4 3V5M3 12H5M4 11V13" stroke="#102a70" />
            <path d="M9 2.5H12M13 2.5H16M9 5.5H12M13 5.5H16M9 8.5H12M13 8.5H16M9 11.5H12M13 11.5H16M9 14.5H12M13 14.5H16" stroke="#7d8fa8" />
          </svg>
        </div>
        <svg className="ml-0.5 h-[17px] w-4" viewBox="0 0 16 17">
          <text x="0" y="7.5" fontSize="9.5" fontWeight="bold" fill="#2c4ea0" className="font-['Liberation_Serif',serif]">
            A
          </text>
          <text x="0" y="16" fontSize="9.5" fontWeight="bold" fill="#a02c3c" className="font-['Liberation_Serif',serif]">
            Z
          </text>
          <path d="M12.5 1V12" stroke="#222" strokeWidth="1.2" />
          <path d="M10 11H15L12.5 15.5Z" fill="#222" />
        </svg>
        <div className="ml-[7px] h-[21px] w-px bg-[#8d8d8d]" />
        <svg className="ml-1.5 h-4 w-4" viewBox="0 0 16 16" fill="none" stroke="#b5b5b5">
          <rect x="0.5" y="0.5" width="15" height="14" fill="#cfcfcf" stroke="#c0c0c0" />
          <path d="M2.5 5.5H7L8 4.5H13.5V11.5H2.5Z" fill="#e8e8e8" stroke="#a8a8a8" />
          <path d="M4.5 7.5H6M7 7.5H12M4.5 9.5H6M7 9.5H12" stroke="#a0a0a0" />
        </svg>
      </div>
      <div className="flex h-[1261px] shrink-0 flex-col border border-[#a0a0a0] bg-white pt-px">
        {PROPS.map((p) => (
          <PropRow key={p.k} p={p} />
        ))}
      </div>
      <div className="mt-[3px] h-[59px] shrink-0 border border-[#a0a0a0] pt-0.5 pl-[5px]">
        <div className="leading-[15px] font-bold">Alignment</div>
        <div className="leading-[15px] tracking-[-0.25px]">Alignment properties for the text.</div>
      </div>
    </div>
  );
}

/* ---------- annotation arrows ---------- */
function Arrows() {
  return (
    <svg
      className="pointer-events-none absolute top-0 left-0 h-[1505px] w-[2283px] drop-shadow-[4px_4px_4px_rgba(0,0,0,0.45)]"
      viewBox="0 0 2283 1505"
      fill="#ff0000"
    >
      <path d="M574.8 75H577L587 480L590 620L596 617L584.5 643.5L572 617L578 620L577 480Z" />
      <path d="M988.5 701.5L1981.7 244.5L1977.3 240L2006 240.3L1987.3 261.5L1986 255L989.5 702.7Z" />
    </svg>
  );
}

const MENU: [string, string][] = [
  ["File", "w-[37px]"],
  ["Edit", "w-[39px]"],
  ["Drawing", "w-[63px]"],
  ["Arrange", "w-[61px]"],
  ["View", "w-[44px]"],
  ["Tools", "w-[46px]"],
  ["Window", "w-[63px]"],
  ["Help", "w-[40px]"],
];

export default function App() {
  return (
    <div className={"relative flex h-[1505px] w-[2283px] flex-col overflow-hidden bg-[#f0f0f0] text-black " + SANS}>
      <div className={"flex h-[31px] shrink-0 items-center border-x border-t border-[#6b6b6b] bg-white pl-2 " + UI}>
        <AppLogo />
        <span className="ml-[5px] tracking-[-0.3px]">Stardraw Design 7.3 - [Project 1 - Rack Layout]</span>
        <svg className="mr-[6px] ml-auto h-3 w-[116px]" viewBox="0 0 116 12" fill="none" stroke="#000">
          <path d="M3 6.5H13M48.5 1.5H57.5V10.5H48.5ZM94.5 1L104.5 11M104.5 1L94.5 11" />
        </svg>
      </div>
      <div className={"flex h-6 shrink-0 items-center border-x border-[#6b6b6b] bg-linear-to-r from-[#f0f0f0] to-[#fcfcfc] pl-1.5 " + UI}>
        <Grip />
        <div className="ml-[3px] w-[27px]">
          <AppLogo />
        </div>
        {MENU.map(([m, w]) => (
          <span key={m} className={"shrink-0 tracking-[-0.35px] " + w}>
            {m}
          </span>
        ))}
        <svg className="mr-[5px] ml-auto h-3 w-[52px]" viewBox="0 0 52 12" fill="none" stroke="#000">
          <path d="M2 9.5H8" strokeWidth="2" />
          <path d="M24.5 5V1.5H30.5V6.5H28.5M21.5 5H28V10.5H21.5ZM24.5 2H30.5M21.5 6H28" strokeWidth="1.3" />
          <path d="M43.5 2.5L50 9.5M50 2.5L43.5 9.5" strokeWidth="2.2" />
        </svg>
      </div>
      <div className={"border-x border-[#6b6b6b] " + UI}>
        <Toolbar />
      </div>
      <div className="h-0.5 shrink-0 border-t border-[#a0a0a0] bg-[#696969]" />
      <div className="flex h-[1374px] shrink-0 bg-white">
        <div className="w-0.5 shrink-0 bg-[#a8a8a8]" />
        <div className="w-px shrink-0 bg-[#696969]" />
        <div className="flex flex-1 bg-white pt-1 pl-1">
          <SymbolBrowser />
          <Center />
          <div className="flex flex-1 bg-[#f0f0f0]">
            <Properties />
            <div className="ml-0.5 w-px bg-[#dcdcdc]" />
          </div>
        </div>
        <div className="w-px shrink-0 bg-[#696969]" />
      </div>
      <div className="flex h-[22px] shrink-0 border-x border-t border-[#d4d4d4] border-x-[#8a8a8a] pl-1">
        <div className="mt-px flex h-[18px] w-[63px] items-center border border-b-0 border-[#d9d9d9] pl-[5px] tracking-[-0.3px]">Dashboard</div>
        <div className="flex h-[21px] w-[75px] items-center bg-white pt-1 pl-[7px] tracking-[-0.12px]">Rack Layout</div>
        <div className="mt-px flex h-[18px] w-[98px] items-center border-t border-r border-[#d9d9d9] pl-[5px] tracking-[-0.2px] whitespace-nowrap">
          Pictorial Schematic
        </div>
      </div>
      <div className="h-0.5 shrink-0 border-t border-[#d9d9d9] bg-white" />
      <div className={"flex h-[25px] shrink-0 items-center border border-t-[#d9d9d9] border-[#6b6b6b] pl-1 " + UI}>
        <span className="tracking-[-0.3px]">Ready</span>
        <div className="ml-auto flex items-center whitespace-nowrap">
          <div className="h-[18px] w-px bg-[#a0a0a0]" />
          <span className="ml-1 w-[170px] tracking-[-0.32px] text-[#0000e0]">Current layer: Front High Detail</span>
          <div className="h-[18px] w-px bg-[#a0a0a0]" />
          <span className="ml-1 w-[197px] tracking-[-0.32px]">Signed in as chapelle@mega-hertz.fr</span>
          <svg className="h-[15px] w-[15px]" viewBox="0 0 15 15" fill="none">
            <rect width="15" height="15" rx="1.5" fill="#2fae2c" />
            <circle cx="9" cy="5.5" r="2.8" stroke="#fff" strokeWidth="1.6" />
            <path d="M7 7.5L3 12M4 11L5.5 12.5" stroke="#fff" strokeWidth="1.6" />
          </svg>
          <span className="ml-1 w-[39px] tracking-[-0.2px]">Online</span>
          <svg className="mt-2 mr-0.5 h-3 w-3" viewBox="0 0 12 12" fill="#a0a0a0">
            <path d="M8 0H10V2H8ZM4 4H6V6H4ZM8 4H10V6H8ZM0 8H2V10H0ZM4 8H6V10H4ZM8 8H10V10H8Z" />
          </svg>
        </div>
      </div>
      <div className="absolute top-[229px] left-[632px] text-[19.2px] leading-[21.3px] font-bold whitespace-nowrap text-[#ff2d6b] [text-shadow:1px_0_#fff,-1px_0_#fff,0_1px_#fff,0_-1px_#fff,2px_1px_#fff,-1px_-1px_#fff,4px_4px_5px_rgba(0,0,0,0.55)]">
        Ajout du texte
        <br />
        Attention à la taille en pouces
        <br />
        et chiffre avec virgule !
      </div>
      <Arrows />
    </div>
  );
}
